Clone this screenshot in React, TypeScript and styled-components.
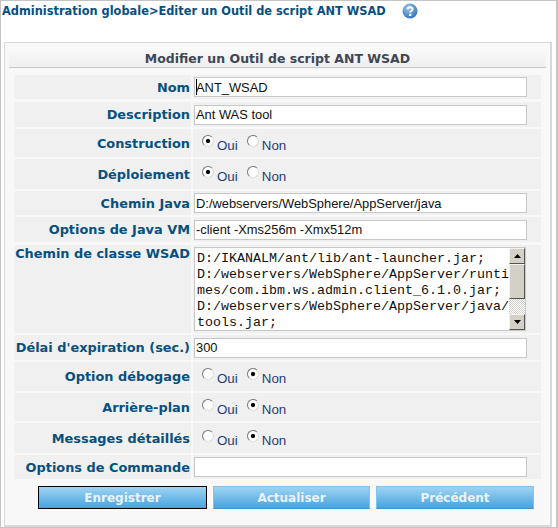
import React from 'react';
import styled, { createGlobalStyle } from 'styled-components';

const GlobalStyle = createGlobalStyle`
  html, body {
    margin: 0;
    padding: 0;
    background: #fff;
  }
  body {
    font-family: "DejaVu Sans", Verdana, sans-serif;
  }
`;

const Page = styled.div`
  width: 558px;
  height: 528px;
  box-sizing: border-box;
  border: 1px solid #c4c4c4;
  border-width: 1px 2px 1px 1px;
  background: #fff;
  overflow: hidden;
`;

const TopBar = styled.div`
  display: flex;
  align-items: center;
  height: 41px;
  padding: 0 0 21px 1px;
  box-sizing: border-box;
  color: #07507f;
  font-size: 11.4px;
  font-weight: bold;
`;

const HelpIcon = styled.svg`
  width: 16px;
  height: 16px;
  margin-left: 16px;
  flex: none;
`;

const Panel = styled.div`
  box-sizing: border-box;
  height: 485px;
  margin: 0 4px 0 3px;
  border: 1px solid #d8d8d8;
  border-bottom-width: 2px;
  border-right-width: 2px;
  background: #f8f8f8;
  padding: 4px 4px 0 4px;
`;

const PanelTitle = styled.div`
  height: 21px;
  box-sizing: border-box;
  padding-top: 4px;
  text-align: center;
  font-size: 12.5px;
  font-weight: bold;
  color: #3f4654;
  background: linear-gradient(#fafafa, #eeeff0);
  border-bottom: 1px solid #c8c8c8;
  margin-bottom: 7px;
`;

const Rows = styled.div`
  display: flex;
  flex-direction: column;
  margin: 0 5px;
`;

const Row = styled.div<{ $h: number; $gap?: number }>`
  display: grid;
  grid-template-columns: 177px 1fr;
  column-gap: 2px;
  height: ${(p) => p.$h}px;
  margin-top: ${(p) => p.$gap ?? 2}px;
  align-items: stretch;
`;

const Label = styled.div<{ $top?: boolean }>`
  display: flex;
  justify-content: flex-end;
  align-items: ${(p) => (p.$top ? 'flex-start' : 'center')};
  padding: ${(p) => (p.$top ? '1px' : '0')} 1px 0 0;
  background: #f0f0f0;
  color: #07507f;
  font-size: 12.9px;
  font-weight: bold;
  white-space: nowrap;
`;

const Value = styled.div<{ $top?: boolean }>`
  display: flex;
  align-items: ${(p) => (p.$top ? 'flex-start' : 'center')};
  padding-left: 1px;
  padding-top: ${(p) => (p.$top ? '2px' : '0')};
  background: #f0f0f0;
`;

const TextInput = styled.input<{ $caret?: boolean }>`
  box-sizing: border-box;
  width: 333px;
  height: 20px;
  border: 1px solid #c8c8c8;
  background: ${(p) => (p.$caret ? 'linear-gradient(#000, #000) no-repeat 1px 1px / 1px 16px, #fff' : '#fff')};
  padding: 0 1px;
  color: #111;
  font-family: "Liberation Sans", Arial, sans-serif;
  font-size: 12.9px;
  outline: none;
`;

const RadioGroup = styled.div`
  display: flex;
  align-items: flex-start;
  padding-left: 8px;
  padding-top: 1px;
`;

const RadioLabel = styled.label`
  display: flex;
  align-items: flex-start;
  margin-right: 9px;
  color: #1c3f73;
  font-family: "Liberation Sans", Arial, sans-serif;
  font-size: 13.33px;
`;

const RadioText = styled.span`
  margin-top: 3px;
  margin-left: 3px;
`;

const RadioDot = styled.span<{ $on?: boolean }>`
  box-sizing: border-box;
  display: block;
  position: relative;
  width: 12px;
  height: 12px;
  border-radius: 50%;
  border: 1px solid #777;
  border-right-color: #ddd;
  border-bottom-color: #ddd;
  background: #fff;
  &::after {
    content: '';
    display: ${(p) => (p.$on ? 'block' : 'none')};
    position: absolute;
    left: 3px;
    top: 3px;
    width: 4px;
    height: 4px;
    border-radius: 50%;
    background: #000;
    box-shadow: 0 0 1px #555;
  }
`;

const AreaBox = styled.div`
  box-sizing: border-box;
  display: flex;
  width: 332px;
  height: 84px;
  border: 1px solid #c8c8c8;
  background: #fff;
`;

const AreaText = styled.textarea`
  flex: 1;
  min-width: 0;
  border: 0;
  padding: 3px 0 0 2px;
  margin: 0;
  resize: none;
  overflow: hidden;
  outline: none;
  color: #111;
  font-family: "Liberation Mono", "Courier New", monospace;
  font-size: 13.33px;
  line-height: 16px;
  word-break: break-all;
`;

const ScrollTrack = styled.div`
  display: flex;
  flex-direction: column;
  width: 16px;
  flex: none;
  background: repeating-conic-gradient(#d4d0c8 0 25%, #fff 0 50%) 0 0 / 2px 2px;
`;

const ScrollPart = styled.div<{ $h: number; $mt?: string }>`
  box-sizing: border-box;
  display: flex;
  align-items: center;
  justify-content: center;
  height: ${(p) => p.$h}px;
  margin-top: ${(p) => p.$mt || '0'};
  background: #d4d0c8;
  border: 1px solid;
  border-color: #f4f2ee #55534f #55534f #f4f2ee;
`;

const ArrowIcon = styled.svg`
  width: 7px;
  height: 4px;
`;

const Buttons = styled.div`
  display: grid;
  grid-template-columns: 169px 157px 158px;
  column-gap: 6px;
  margin: 7px 0 0 29px;
`;

const Button = styled.button<{ $focus?: boolean }>`
  height: 23px;
  box-sizing: border-box;
  padding: 0;
  border: 1px solid ${(p) => (p.$focus ? '#000' : '#7fc4ea')};
  border-bottom-color: ${(p) => (p.$focus ? '#000' : '#3a9ad8')};
  background: linear-gradient(#a0d3f3, #46a4de);
  color: #e8f4fb;
  font-family: "DejaVu Sans", Verdana, sans-serif;
  font-size: 12px;
  font-weight: bold;
`;

const classPath =
  'D:/IKANALM/ant/lib/ant-launcher.jar;\nD:/webservers/WebSphere/AppServer/runtimes/com.ibm.ws.admin.client_6.1.0.jar;\nD:/webservers/WebSphere/AppServer/java/tools.jar;';

const Radios = ({ on }: { on: boolean }) => (
  <RadioGroup>
    <RadioLabel>
      <RadioDot $on={on} />
      <RadioText>Oui</RadioText>
    </RadioLabel>
    <RadioLabel>
      <RadioDot $on={!on} />
      <RadioText>Non</RadioText>
    </RadioLabel>
  </RadioGroup>
);

const App = () => (
  <Page>
    <GlobalStyle />
    <TopBar>
      Administration globale&gt;Editer un Outil de script ANT WSAD
      <HelpIcon viewBox="0 0 16 16">
        <defs>
          <radialGradient id="helpBg" cx="40%" cy="30%" r="75%">
            <stop offset="0" stopColor="#9cc8ee" />
            <stop offset="1" stopColor="#2c6fb4" />
          </radialGradient>
        </defs>
        <circle cx="8" cy="8" r="7.5" fill="url(#helpBg)" />
        <path d="M5.6 6.2 C5.7 3.6 10.6 3.5 10.5 6.2 C10.5 8 8.2 7.9 8.2 9.6" fill="none" stroke="#fff" strokeWidth="1.9" />
        <rect x="7.1" y="10.8" width="2.2" height="2.2" fill="#fff" />
      </HelpIcon>
    </TopBar>
    <Panel>
      <PanelTitle>Modifier un Outil de script ANT WSAD</PanelTitle>
      <Rows>
        <Row $h={24} $gap={0}>
          <Label>Nom</Label>
          <Value><TextInput $caret defaultValue="ANT_WSAD" /></Value>
        </Row>
        <Row $h={25} $gap={3}>
          <Label>Description</Label>
          <Value><TextInput defaultValue="Ant WAS tool" /></Value>
        </Row>
        <Row $h={28}>
          <Label>Construction</Label>
          <Value><Radios on /></Value>
        </Row>
        <Row $h={30}>
          <Label>Déploiement</Label>
          <Value><Radios on /></Value>
        </Row>
        <Row $h={24}>
          <Label>Chemin Java</Label>
          <Value><TextInput defaultValue="D:/webservers/WebSphere/AppServer/java" /></Value>
        </Row>
        <Row $h={25}>
          <Label>Options de Java VM</Label>
          <Value><TextInput defaultValue="-client -Xms256m -Xmx512m" /></Value>
        </Row>
        <Row $h={88} $gap={3}>
          <Label $top>Chemin de classe WSAD</Label>
          <Value $top>
            <AreaBox>
              <AreaText defaultValue={classPath} />
              <ScrollTrack>
                <ScrollPart $h={16}>
                  <ArrowIcon viewBox="0 0 7 4"><path d="M3.5 0 L7 4 H0 Z" fill="#000" /></ArrowIcon>
                </ScrollPart>
                <ScrollPart $h={35} />
                <ScrollPart $h={16} $mt="auto">
                  <ArrowIcon viewBox="0 0 7 4"><path d="M0 0 H7 L3.5 4 Z" fill="#000" /></ArrowIcon>
                </ScrollPart>
              </ScrollTrack>
            </AreaBox>
          </Value>
        </Row>
        <Row $h={25}>
          <Label>Délai d'expiration (sec.)</Label>
          <Value><TextInput defaultValue="300" /></Value>
        </Row>
        <Row $h={29}>
          <Label>Option débogage</Label>
          <Value><Radios on={false} /></Value>
        </Row>
        <Row $h={28}>
          <Label>Arrière-plan</Label>
          <Value><Radios on={false} /></Value>
        </Row>
        <Row $h={30}>
          <Label>Messages détaillés</Label>
          <Value><Radios on={false} /></Value>
        </Row>
        <Row $h={24}>
          <Label>Options de Commande</Label>
          <Value><TextInput defaultValue="" /></Value>
        </Row>
      </Rows>
      <Buttons>
        <Button $focus>Enregistrer</Button>
        <Button>Actualiser</Button>
        <Button>Précédent</Button>
      </Buttons>
    </Panel>
  </Page>
);

export default App;
